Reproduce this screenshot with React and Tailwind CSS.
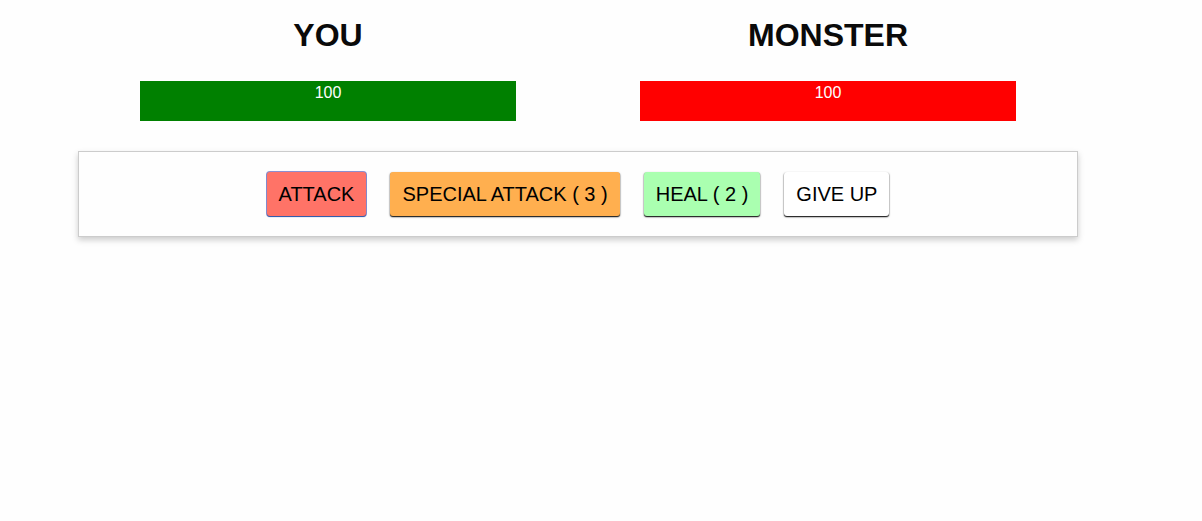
const fighters = [
  { name: 'YOU', health: 100, color: 'bg-[#008000]' },
  { name: 'MONSTER', health: 100, color: 'bg-[#ff0000]' },
];

const actions = [
  { label: 'ATTACK', style: 'bg-[#ff7367] shadow-[0_1px_1px_#2c58a8,0_0_0_1px_#8c8fd0]' },
  { label: 'SPECIAL ATTACK ( 3 )', style: 'bg-[#ffaf4f] shadow-[0_1px_1px_#222,0_1px_2px_#0008]' },
  { label: 'HEAL ( 2 )', style: 'bg-[#aaffb0] shadow-[0_1px_1px_#222,0_1px_2px_#0008]' },
  { label: 'GIVE UP', style: 'bg-white shadow-[0_1px_1px_#222,0_1px_2px_#0008]' },
];

function Fighter({ name, health, color }) {
  return (
    <div className="flex-1 px-[15px] text-center">
      <h1 className="text-[32px] leading-[46px] font-bold">{name}</h1>
      <div className="mx-auto mt-[23px] h-10 w-4/5">
        <div
          className={`h-full pt-[2px] text-base leading-5 text-white ${color}`}
          style={{ width: `${health}%` }}
        >
          {health}
        </div>
      </div>
    </div>
  );
}

export default function App() {
  return (
    <main className="min-h-screen bg-[#fefefe] pr-[46px] pt-3 font-['Liberation_Sans',Arial,sans-serif] text-[#0a0a0a]">
      <section className="mx-auto flex max-w-[1000px]">
        {fighters.map((fighter) => (
          <Fighter key={fighter.name} {...fighter} />
        ))}
      </section>
      <section className="mx-auto mt-[30px] flex max-w-[1000px] flex-wrap justify-center gap-6 border border-[#ccc] py-5 shadow-[0_3px_6px_#ccc]">
        {actions.map(({ label, style }) => (
          <button
            key={label}
            type="button"
            className={`h-11 cursor-pointer rounded-[3px] px-3 text-xl text-black ${style}`}
          >
            {label}
          </button>
        ))}
      </section>
    </main>
  );
}
